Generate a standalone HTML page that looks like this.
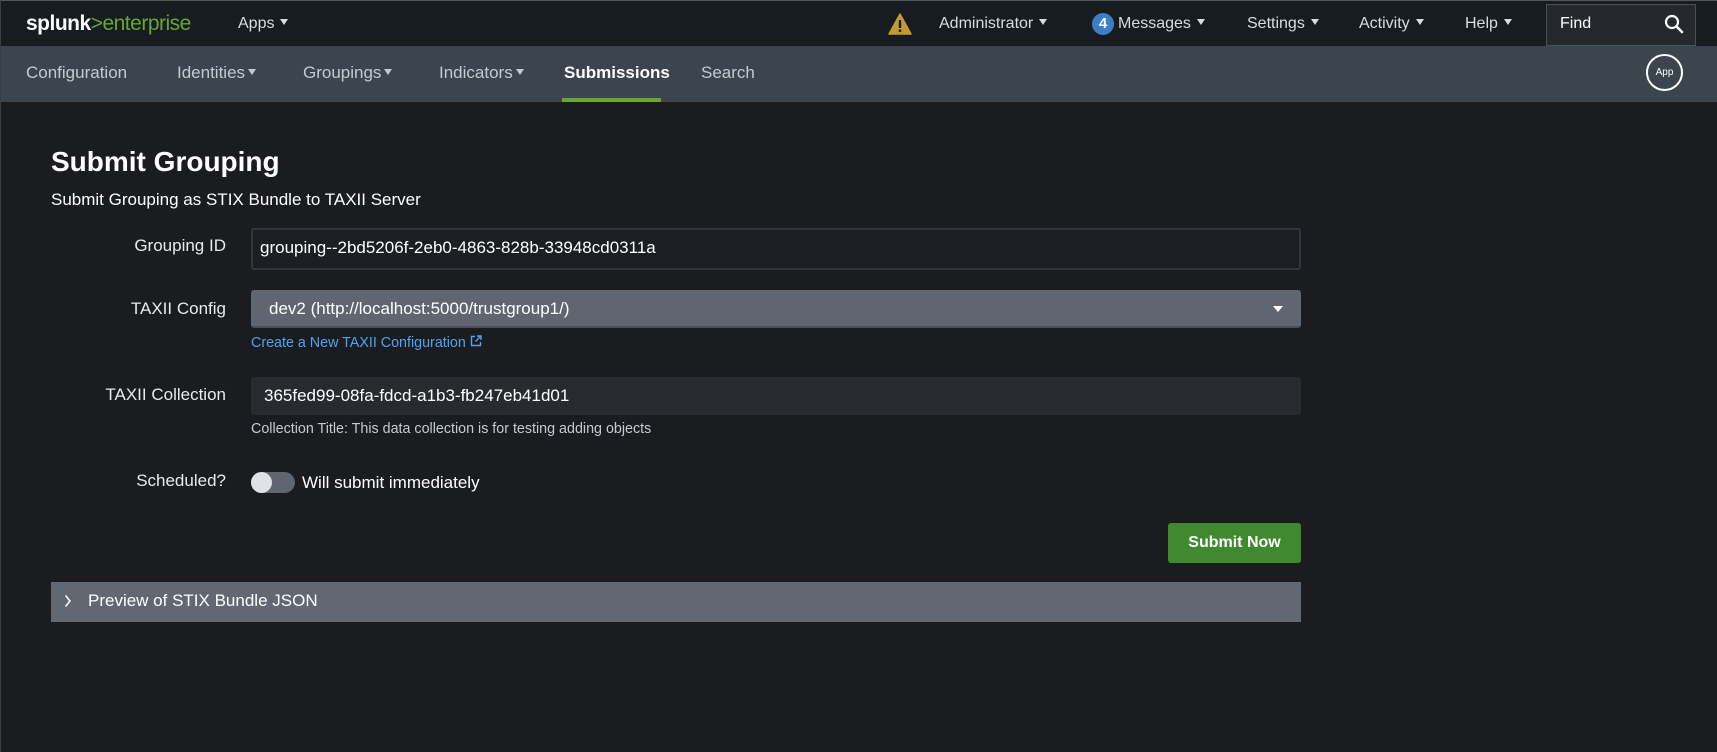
<!DOCTYPE html>
<html><head><meta charset="utf-8"><style>
*{box-sizing:border-box;margin:0;padding:0}
body{width:1717px;height:752px;background:#1a1c20;font-family:"Liberation Sans",sans-serif;color:#fff;position:relative;overflow:hidden;border-left:1px solid #3a3f45;border-top:1px solid #555}
.abs{position:absolute;white-space:nowrap}
.top{position:absolute;left:0;top:0;width:1717px;height:45px;background:#171c20}
.sub{position:absolute;left:0;top:45px;width:1717px;height:56px;background:#3c444d}
.tn{font-size:16px;color:#d8dce0;top:14px}
.car{display:inline-block;width:0;height:0;border-left:4.5px solid transparent;border-right:4.5px solid transparent;border-top:6px solid #d8dce0;margin-left:6px;vertical-align:3px}
.nv{font-size:17px;color:#c3cad2;top:17px}
.lbl{font-size:17px;color:#e8eaed;text-align:right;width:200px;left:25px}
</style></head><body>
<div class="top">
 <div class="abs" style="left:25px;top:11px;font-size:21px;letter-spacing:-0.5px"><span style="color:#fff;font-weight:bold">splunk</span><span style="color:#65a637">&gt;enterprise</span></div>
 <div class="abs tn" style="left:237px">Apps<span class="car"></span></div>
 <svg class="abs" style="left:887px;top:12px" width="24" height="22" viewBox="0 0 24 22"><path d="M12 1 L23 21 L1 21 Z" fill="#c29a2e" stroke="#c29a2e" stroke-linejoin="round" stroke-width="1.5"/><rect x="10.8" y="7" width="2.4" height="8" fill="#171c20"/><rect x="10.8" y="16.5" width="2.4" height="2.4" fill="#171c20"/></svg>
 <div class="abs tn" style="left:938px">Administrator<span class="car"></span></div>
 <div class="abs" style="left:1091px;top:12px;width:22px;height:22px;border-radius:50%;background:#3c7fc7;font-size:15px;font-weight:bold;text-align:center;line-height:22px">4</div>
 <div class="abs tn" style="left:1117px">Messages<span class="car"></span></div>
 <div class="abs tn" style="left:1246px">Settings<span class="car"></span></div>
 <div class="abs tn" style="left:1358px">Activity<span class="car"></span></div>
 <div class="abs tn" style="left:1464px">Help<span class="car"></span></div>
 <div class="abs" style="left:1545px;top:3px;width:150px;height:42px;background:#25292e;border:1px solid #4a5058"></div>
 <div class="abs tn" style="left:1559px;color:#fff">Find</div>
 <svg class="abs" style="left:1663px;top:13px" width="20" height="20" viewBox="0 0 20 20"><circle cx="8" cy="8" r="6" fill="none" stroke="#fff" stroke-width="2.2"/><path d="M12.5 12.5 L18 18" stroke="#fff" stroke-width="2.6" stroke-linecap="round"/></svg>
</div>
<div class="sub">
 <div class="abs nv" style="left:25px">Configuration</div>
 <div class="abs nv" style="left:176px">Identities<span class="car" style="border-top-color:#c3cad2;margin-left:3px"></span></div>
 <div class="abs nv" style="left:302px">Groupings<span class="car" style="border-top-color:#c3cad2;margin-left:3px"></span></div>
 <div class="abs nv" style="left:438px">Indicators<span class="car" style="border-top-color:#c3cad2;margin-left:3px"></span></div>
 <div class="abs nv" style="left:563px;color:#fff;font-weight:bold">Submissions</div>
 <div class="abs" style="left:561px;top:52px;width:99px;height:4px;background:#65a637"></div>
 <div class="abs nv" style="left:700px">Search</div>
 <div class="abs" style="left:1645px;top:8px;width:37px;height:37px;border-radius:50%;border:2px solid #fff;font-size:10px;text-align:center;line-height:33px">App</div>
</div>
<div class="abs" style="left:50px;top:145px;font-size:28px;font-weight:bold">Submit Grouping</div>
<div class="abs" style="left:50px;top:189px;font-size:17px">Submit Grouping as STIX Bundle to TAXII Server</div>
<div class="abs lbl" style="top:235px">Grouping ID</div>
<div class="abs" style="left:250px;top:227px;width:1050px;height:42px;border:2px solid #30353b;border-radius:3px;background:#1b1f23"></div>
<div class="abs" style="left:259px;top:237px;font-size:17px">grouping--2bd5206f-2eb0-4863-828b-33948cd0311a</div>
<div class="abs lbl" style="top:298px">TAXII Config</div>
<div class="abs" style="left:250px;top:289px;width:1050px;height:38px;background:#5f6670;border-radius:3px;border-bottom:2px solid #4a5058"></div>
<div class="abs" style="left:268px;top:298px;font-size:17px">dev2 (http://localhost:5000/trustgroup1/)</div>
<div class="abs" style="left:1272px;top:305px;border-left:5px solid transparent;border-right:5px solid transparent;border-top:6px solid #fff"></div>
<div class="abs" style="left:250px;top:334px;font-size:14.3px;color:#4fa3f0">Create a New TAXII Configuration <svg width="12" height="12" viewBox="0 0 12 12" style="vertical-align:0"><path d="M5 1.5H1.5V10.5H10.5V7M7 1H11V5M11 1L5.5 6.5" fill="none" stroke="#4fa3f0" stroke-width="1.4"/></svg></div>
<div class="abs lbl" style="top:384px">TAXII Collection</div>
<div class="abs" style="left:250px;top:376px;width:1050px;height:38px;background:#272b30;border-radius:3px"></div>
<div class="abs" style="left:263px;top:385px;font-size:17px">365fed99-08fa-fdcd-a1b3-fb247eb41d01</div>
<div class="abs" style="left:250px;top:420px;font-size:14.3px;color:#c3cbd4">Collection Title: This data collection is for testing adding objects</div>
<div class="abs lbl" style="top:470px">Scheduled?</div>
<div class="abs" style="left:250px;top:471px;width:44px;height:21px;border-radius:11px;background:#5f6670"></div>
<div class="abs" style="left:250px;top:471px;width:21px;height:21px;border-radius:50%;background:#dfe2e6"></div>
<div class="abs" style="left:301px;top:472px;font-size:17px">Will submit immediately</div>
<div class="abs" style="left:1167px;top:522px;width:133px;height:40px;background:#3f8a30;border-radius:3px;font-size:16px;font-weight:bold;text-align:center;line-height:40px">Submit Now</div>
<div class="abs" style="left:50px;top:581px;width:1250px;height:40px;background:#616872"></div>
<svg class="abs" style="left:63px;top:593px" width="8" height="14" viewBox="0 0 8 14"><path d="M1.5 1.5L6 7L1.5 12.5" fill="none" stroke="#fff" stroke-width="1.5"/></svg>
<div class="abs" style="left:87px;top:590px;font-size:17px">Preview of STIX Bundle JSON</div>
</body></html>
